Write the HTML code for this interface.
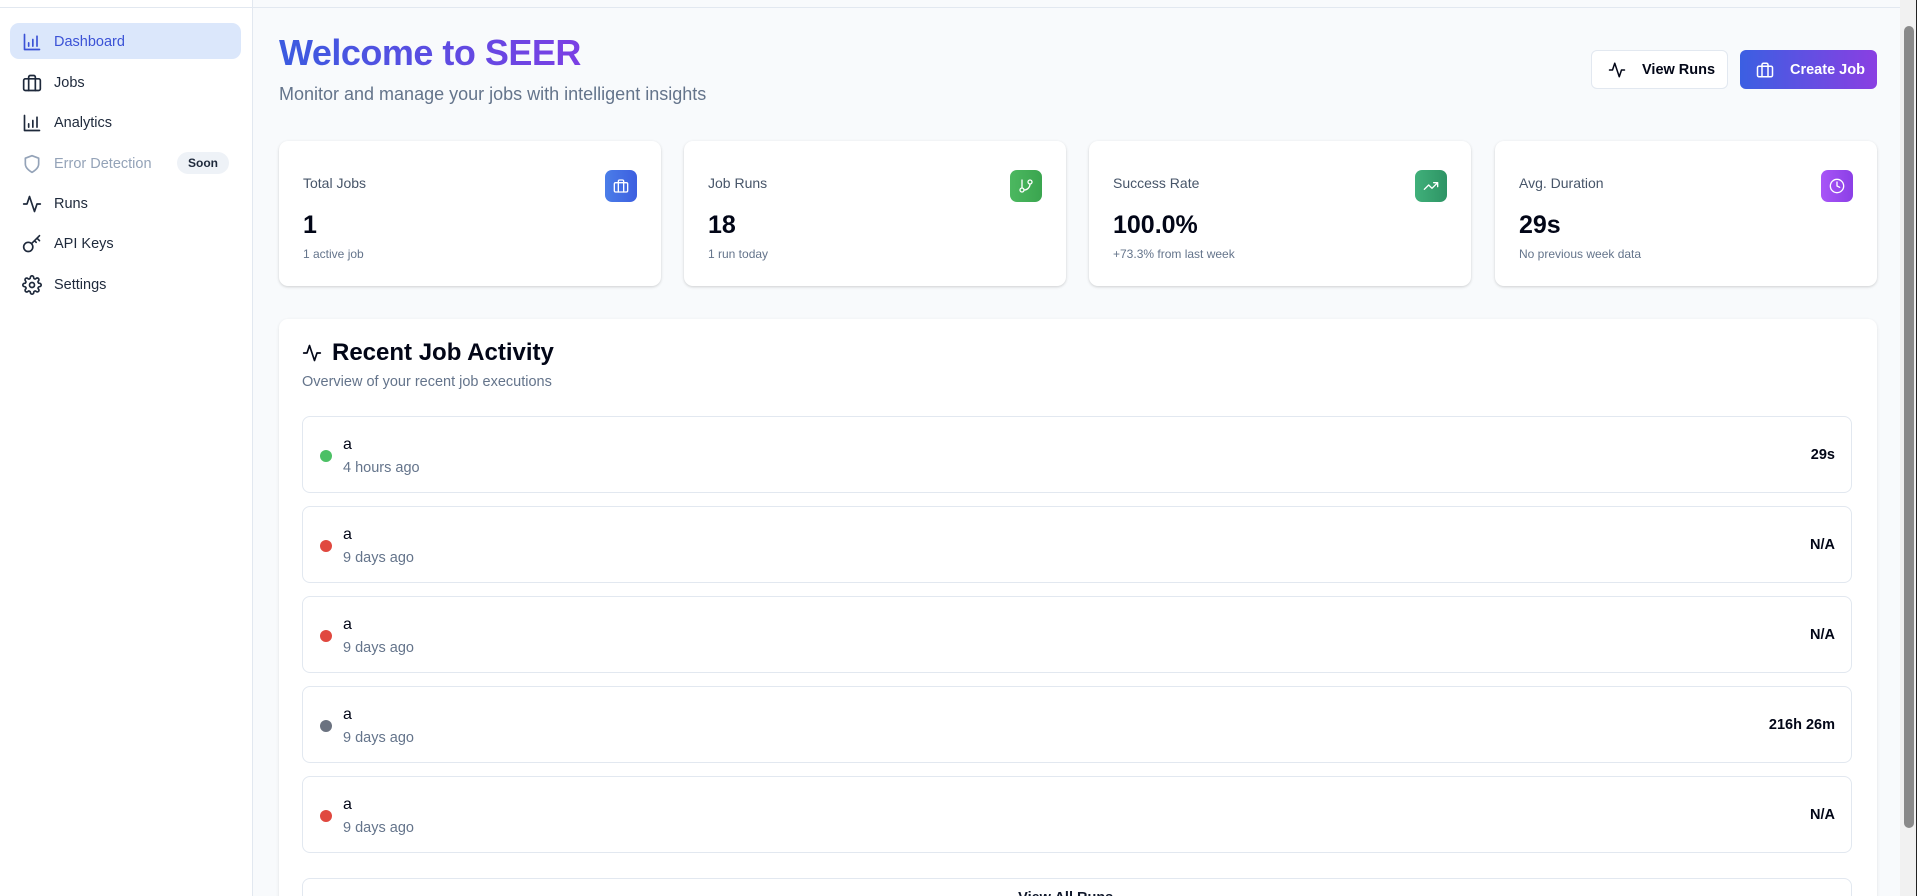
<!DOCTYPE html>
<html style="width:1917px;height:896px;overflow:hidden"><head><meta charset="utf-8"><style>
*{box-sizing:border-box;margin:0;padding:0}
body{width:1917px;height:896px;overflow:hidden;background:#f8fafc;font-family:"Liberation Sans",sans-serif;color:#0f172a}
#w{position:relative;width:1917px;height:896px;overflow:hidden}
.side{position:absolute;left:0;top:0;width:253px;height:896px;background:#fff;border-right:1px solid #e2e8f0}
.topline{position:absolute;left:0;top:7px;width:1900px;height:1px;background:#e2e8f0}
.nav{position:absolute;left:10px;width:231px;height:36px;border-radius:9px;display:flex;align-items:center;font-size:14.5px;color:#1e293b}
.nav svg{position:absolute;left:12px;top:9px;width:20px;height:20px;fill:none;stroke:currentColor;stroke-width:2;stroke-linecap:round;stroke-linejoin:round}
.nav span{position:absolute;left:44px;top:11px}
.active{background:#dbe7fb;color:#3b52d6}
.soon{position:absolute;left:167px;top:7px;font-size:12px;font-weight:bold;color:#1e293b;background:#eef2f7;border-radius:11px;padding:4px 11px}
h1{position:absolute;left:279px;top:32px;font-size:36px;font-weight:bold;background:linear-gradient(90deg,#3b5be0,#7b3fe4);-webkit-background-clip:text;color:transparent;letter-spacing:-.5px}
.sub{position:absolute;left:279px;top:84px;font-size:18px;color:#64748b}
.btn{position:absolute;top:50px;height:39px;border-radius:6px;display:flex;align-items:center;font-size:14.5px;font-weight:bold}
.btn svg{width:18px;height:18px;fill:none;stroke:currentColor;stroke-width:2;stroke-linecap:round;stroke-linejoin:round;margin-left:16px;margin-right:16px}
.card{position:absolute;top:141px;width:382px;height:145px;background:#fff;border-radius:9px;box-shadow:0 1px 3px rgba(0,0,0,.12),0 1px 2px rgba(0,0,0,.06)}
.card .l{position:absolute;left:24px;top:34px;font-size:14px;color:#475569}
.card .v{position:absolute;left:24px;top:70px;font-size:25px;font-weight:bold;color:#020617}
.card .s{position:absolute;left:24px;top:106px;font-size:12px;color:#64748b}
.card .i{position:absolute;right:24px;top:29px;width:32px;height:32px;border-radius:7px;display:flex;align-items:center;justify-content:center}
.card .i svg{width:16px;height:16px;fill:none;stroke:#fff;stroke-width:2;stroke-linecap:round;stroke-linejoin:round}
.panel{position:absolute;left:279px;top:319px;width:1598px;height:600px;background:#fff;border-radius:9px;box-shadow:0 1px 3px rgba(0,0,0,.1)}
.ph{position:absolute;left:302px;top:339px;font-size:24px;font-weight:bold;color:#020617;display:flex;align-items:center}
.ph svg{width:20px;height:20px;fill:none;stroke:#020617;stroke-width:2;margin-right:10px;stroke-linecap:round;stroke-linejoin:round}
.ps{position:absolute;left:302px;top:374px;font-size:14.5px;color:#64748b}
.row{position:absolute;left:302px;width:1550px;height:77px;border:1px solid #e2e8f0;border-radius:8px;background:#fff}
.dot{position:absolute;left:17px;top:33px;width:12px;height:12px;border-radius:50%}
.rn{position:absolute;left:40px;top:19px;font-size:16px;color:#020617}
.rt{position:absolute;left:40px;top:43px;font-size:14.5px;color:#64748b}
.rd{position:absolute;right:16px;top:30px;font-size:14.5px;font-weight:bold;color:#020617}
.scroll{position:absolute;left:1900px;top:0;width:17px;height:896px;background:#f1f1f1;border-right:1px solid #222}
.thumb{position:absolute;left:4px;top:26px;width:10px;height:802px;background:#8a8a8a;border-radius:5px}
</style></head><body><div id="w">
<div class="side">
<div class="nav active" style="top:23px"><svg viewBox="0 0 24 24"><path d="M3 3v18h18M8 17v-4M13 17V9M18 17V5"/></svg><span>Dashboard</span></div>
<div class="nav" style="top:64px"><svg viewBox="0 0 24 24"><rect x="2" y="7" width="20" height="14" rx="2"/><path d="M16 21V5a2 2 0 0 0-2-2h-4a2 2 0 0 0-2 2v16"/></svg><span>Jobs</span></div>
<div class="nav" style="top:104px"><svg viewBox="0 0 24 24"><path d="M3 3v18h18M8 17v-4M13 17V9M18 17V5"/></svg><span>Analytics</span></div>
<div class="nav" style="top:145px;color:#94a3b8"><svg viewBox="0 0 24 24"><path d="M12 22s8-4 8-10V5l-8-3-8 3v7c0 6 8 10 8 10z"/></svg><span>Error Detection</span><div class="soon">Soon</div></div>
<div class="nav" style="top:185px"><svg viewBox="0 0 24 24"><path d="M22 12h-4l-3 9L9 3l-3 9H2"/></svg><span>Runs</span></div>
<div class="nav" style="top:225px"><svg viewBox="0 0 24 24"><circle cx="7.5" cy="15.5" r="5.5"/><path d="M11.5 11.5 21 2M18 5l3 3M15 8l2 2"/></svg><span>API Keys</span></div>
<div class="nav" style="top:266px"><svg viewBox="0 0 24 24"><circle cx="12" cy="12" r="3"/><path d="M19.4 15a1.65 1.65 0 0 0 .33 1.82l.06.06a2 2 0 1 1-2.83 2.830l-.06-.06a1.65 1.65 0 0 0-1.82-.33 1.65 1.65 0 0 0-1 1.51V21a2 2 0 1 1-4 0v-.09A1.65 1.65 0 0 0 9 19.4a1.65 1.65 0 0 0-1.820.33l-.06.06a2 2 0 1 1-2.83-2.83l.06-.06A1.65 1.65 0 0 0 4.68 15a1.65 1.65 0 0 0-1.51-1H3a2 2 0 1 1 0-4h.09A1.65 1.65 0 0 0 4.6 9a1.65 1.65 0 0 0-.33-1.82l-.06-.06a2 2 0 1 1 2.83-2.83l.06.06A1.65 1.65 0 0 0 9 4.68 1.65 1.65 0 0 0 10 3.17V3a2 2 0 1 1 4 0v.09a1.65 1.65 0 0 0 1 1.51 1.65 1.65 0 0 0 1.82-.33l.06-.06a2 2 0 1 1 2.83 2.83l-.06.06A1.65 1.65 0 0 0 19.4 9a1.65 1.65 0 0 0 1.51 1H21a2 2 0 1 1 0 4h-.09a1.65 1.65 0 0 0-1.51 1z"/></svg><span>Settings</span></div>
</div>
<div class="topline"></div>
<h1>Welcome to SEER</h1>
<div class="sub">Monitor and manage your jobs with intelligent insights</div>
<div class="btn" style="left:1591px;width:137px;background:#fff;border:1px solid #e2e8f0;color:#020617"><svg viewBox="0 0 24 24"><path d="M22 12h-4l-3 9L9 3l-3 9H2"/></svg>View Runs</div>
<div class="btn" style="left:1740px;width:137px;background:linear-gradient(90deg,#3b5fe2,#8a3fe2);color:#fff"><svg viewBox="0 0 24 24"><rect x="2" y="7" width="20" height="14" rx="2"/><path d="M16 21V5a2 2 0 0 0-2-2h-4a2 2 0 0 0-2 2v16"/></svg>Create Job</div>

<div class="card" style="left:279px"><div class="l">Total Jobs</div><div class="v">1</div><div class="s">1 active job</div><div class="i" style="background:linear-gradient(90deg,#4a7de8,#3d5fe0)"><svg viewBox="0 0 24 24"><rect x="2" y="7" width="20" height="14" rx="2"/><path d="M16 21V5a2 2 0 0 0-2-2h-4a2 2 0 0 0-2 2v16"/></svg></div></div>
<div class="card" style="left:684px"><div class="l">Job Runs</div><div class="v">18</div><div class="s">1 run today</div><div class="i" style="background:linear-gradient(90deg,#4cb860,#3aa54f)"><svg viewBox="0 0 24 24"><path d="M6 3v12"/><circle cx="18" cy="6" r="3"/><circle cx="6" cy="18" r="3"/><path d="M18 9a9 9 0 0 1-9 9"/></svg></div></div>
<div class="card" style="left:1089px"><div class="l">Success Rate</div><div class="v">100.0%</div><div class="s">+73.3% from last week</div><div class="i" style="background:linear-gradient(90deg,#40b07a,#2e9465)"><svg viewBox="0 0 24 24"><path d="M22 7l-8.5 8.5-5-5L2 17M16 7h6v6"/></svg></div></div>
<div class="card" style="left:1495px"><div class="l">Avg. Duration</div><div class="v">29s</div><div class="s">No previous week data</div><div class="i" style="background:linear-gradient(90deg,#a855f7,#8b3fe6)"><svg viewBox="0 0 24 24"><circle cx="12" cy="12" r="10"/><path d="M12 6v6l4 2"/></svg></div></div>

<div class="panel"></div>
<div class="ph"><svg viewBox="0 0 24 24"><path d="M22 12h-4l-3 9L9 3l-3 9H2"/></svg>Recent Job Activity</div>
<div class="ps">Overview of your recent job executions</div>

<div class="row" style="top:416px"><div class="dot" style="background:#4cc065"></div><div class="rn">a</div><div class="rt">4 hours ago</div><div class="rd">29s</div></div>
<div class="row" style="top:506px"><div class="dot" style="background:#e0483f"></div><div class="rn">a</div><div class="rt">9 days ago</div><div class="rd">N/A</div></div>
<div class="row" style="top:596px"><div class="dot" style="background:#e0483f"></div><div class="rn">a</div><div class="rt">9 days ago</div><div class="rd">N/A</div></div>
<div class="row" style="top:686px"><div class="dot" style="background:#6b7280"></div><div class="rn">a</div><div class="rt">9 days ago</div><div class="rd">216h 26m</div></div>
<div class="row" style="top:776px"><div class="dot" style="background:#e0483f"></div><div class="rn">a</div><div class="rt">9 days ago</div><div class="rd">N/A</div></div>
<div class="row" style="top:878px;height:40px;text-align:center;font-size:14.5px;font-weight:bold;padding-top:11px">View All Runs &nbsp;→</div>

<div class="scroll"><div class="thumb"></div></div>
</div></body></html>
